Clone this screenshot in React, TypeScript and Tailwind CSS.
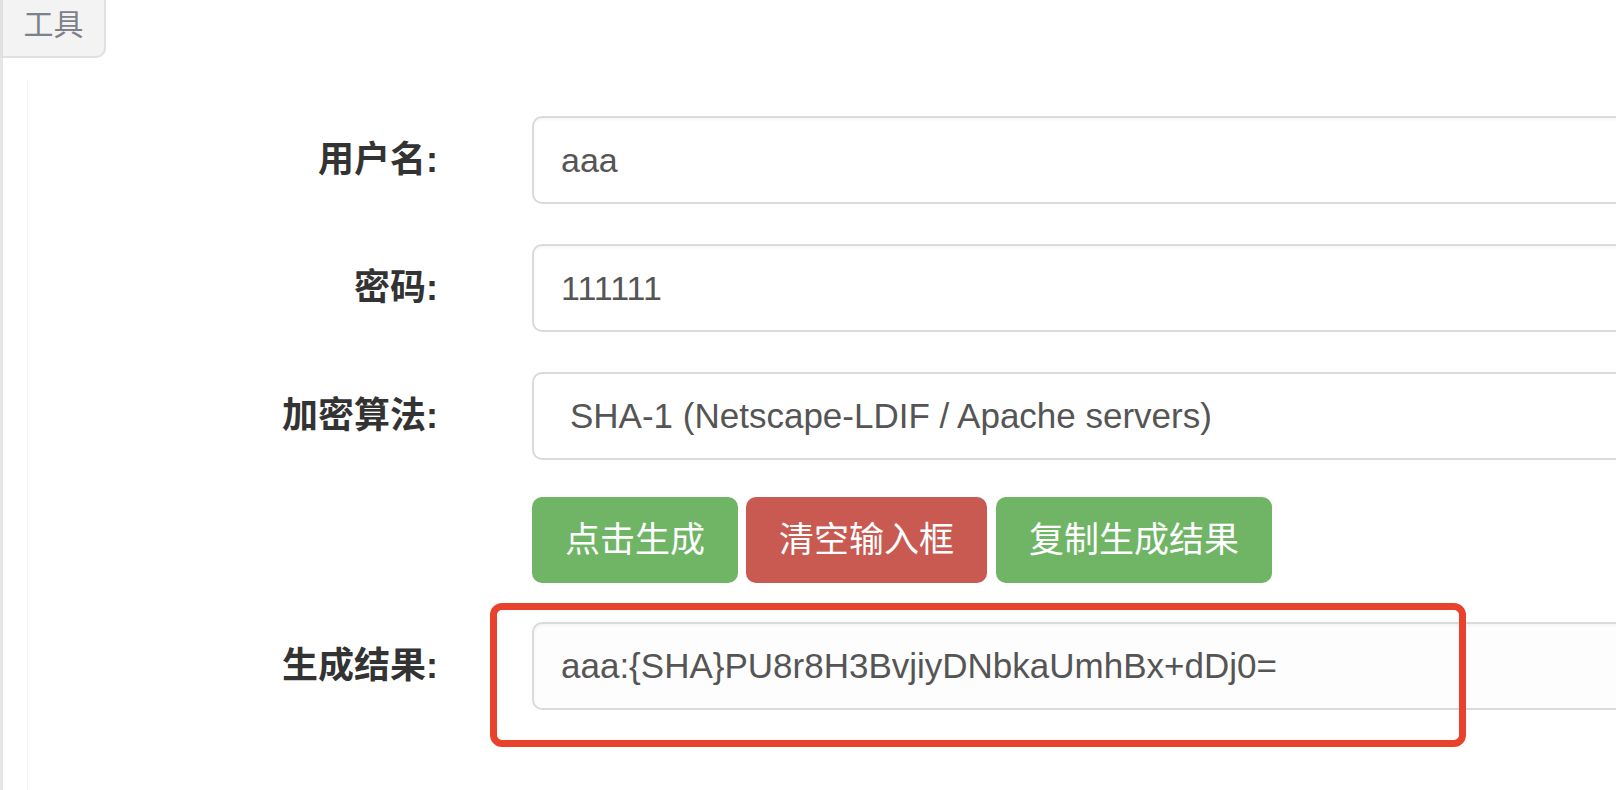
const font = "font-['Liberation_Sans','Noto_Sans_CJK_SC',sans-serif]";

function Label({ text }: { text: string }) {
  return (
    <div className="w-[410px] shrink-0 text-right text-[36px] font-bold text-[#333]">
      {text}:
    </div>
  );
}

function Field({ value, readOnly }: { value: string; readOnly?: boolean }) {
  return (
    <div
      className={`flex h-[88px] w-[1200px] shrink-0 items-center rounded-[10px] border-2 border-[#dadada] px-[27px] text-[#555] shadow-[inset_0_2px_3px_rgba(0,0,0,0.04)] ${
        readOnly ? "bg-[#fdfdfd] text-[35px]" : "bg-white text-[34px]"
      }`}
    >
      {value}
    </div>
  );
}

export default function App() {
  return (
    <div className={`relative flex h-[790px] w-[1616px] flex-col overflow-hidden bg-white ${font}`}>
      {/* Tab */}
      <div className="flex h-[58px] w-[106px] shrink-0 items-center justify-center rounded-br-[10px] border-b-2 border-r-2 border-l-[3px] border-[#e0e0e0] bg-[#f3f3f3] pb-[8px] text-[30px] text-[#7d8189]">
        工具
      </div>

      {/* Body */}
      <div className="flex flex-1 border-l-[3px] border-[#e6e6e6]">
        <div className="ml-[24px] mt-[22px] flex flex-1 flex-col border-l border-[#f2f2f2] pt-[36px]">
          <div className="flex items-center gap-[94px]">
            <Label text="用户名" />
            <Field value="aaa" />
          </div>

          <div className="mt-[40px] flex items-center gap-[94px]">
            <Label text="密码" />
            <Field value="111111" />
          </div>

          <div className="mt-[40px] flex items-center gap-[94px]">
            <Label text="加密算法" />
            <div className="flex h-[88px] w-[1200px] shrink-0 items-center rounded-[10px] border-2 border-[#dadada] bg-white pl-[36px] text-[35px] text-[#555]">
              SHA-1 (Netscape-LDIF / Apache servers)
            </div>
          </div>

          <div className="mt-[37px] flex items-center gap-[94px]">
            <div className="w-[410px] shrink-0" />
            <div className="flex gap-[8px]">
              <button className="h-[86px] rounded-[10px] bg-[#70b466] px-[33px] text-[35px] text-white">
                点击生成
              </button>
              <button className="h-[86px] rounded-[10px] bg-[#c95a52] px-[33px] text-[35px] text-white">
                清空输入框
              </button>
              <button className="ml-[1px] h-[86px] rounded-[10px] bg-[#70b466] px-[33px] text-[35px] text-white">
                复制生成结果
              </button>
            </div>
          </div>

          <div className="mt-[39px] flex items-center gap-[94px]">
            <Label text="生成结果" />
            <Field value="aaa:{SHA}PU8r8H3BvjiyDNbkaUmhBx+dDj0=" readOnly />
          </div>
        </div>
      </div>

      {/* red annotation box */}
      <div className="absolute left-[490px] top-[603px] h-[144px] w-[976px] rounded-[12px] border-[7px] border-[#e8412c]" />
    </div>
  );
}
